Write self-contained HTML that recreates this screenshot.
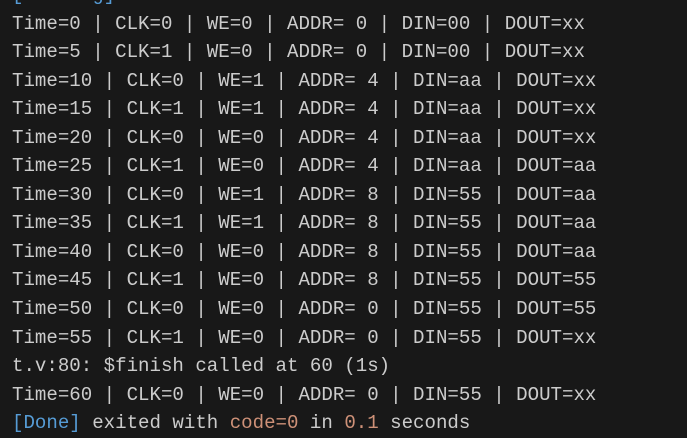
<!DOCTYPE html><html><head><style>
html,body{margin:0;padding:0;background:#181818;width:687px;height:415px;overflow:hidden}
.t{position:absolute;left:12px;top:-19px;font-family:"Liberation Mono",monospace;font-size:19.1px;line-height:28.55px;color:#cccccc;white-space:pre}
.b{color:#569cd6}.o{color:#ce9178}
</style></head><body><div class="t"><span class="b">[Running]</span> <span class="o">t.v</span>
Time=0 | CLK=0 | WE=0 | ADDR= 0 | DIN=00 | DOUT=xx
Time=5 | CLK=1 | WE=0 | ADDR= 0 | DIN=00 | DOUT=xx
Time=10 | CLK=0 | WE=1 | ADDR= 4 | DIN=aa | DOUT=xx
Time=15 | CLK=1 | WE=1 | ADDR= 4 | DIN=aa | DOUT=xx
Time=20 | CLK=0 | WE=0 | ADDR= 4 | DIN=aa | DOUT=xx
Time=25 | CLK=1 | WE=0 | ADDR= 4 | DIN=aa | DOUT=aa
Time=30 | CLK=0 | WE=1 | ADDR= 8 | DIN=55 | DOUT=aa
Time=35 | CLK=1 | WE=1 | ADDR= 8 | DIN=55 | DOUT=aa
Time=40 | CLK=0 | WE=0 | ADDR= 8 | DIN=55 | DOUT=aa
Time=45 | CLK=1 | WE=0 | ADDR= 8 | DIN=55 | DOUT=55
Time=50 | CLK=0 | WE=0 | ADDR= 0 | DIN=55 | DOUT=55
Time=55 | CLK=1 | WE=0 | ADDR= 0 | DIN=55 | DOUT=xx
t.v:80: $finish called at 60 (1s)
Time=60 | CLK=0 | WE=0 | ADDR= 0 | DIN=55 | DOUT=xx
<span class="b">[Done]</span> exited with <span class="o">code=0</span> in <span class="o">0.1</span> seconds</div></body></html>
